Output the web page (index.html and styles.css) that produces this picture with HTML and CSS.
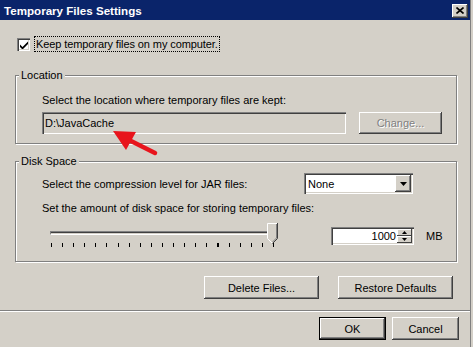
FILE: index.html
```html
<!DOCTYPE html>
<html lang="en">
<head>
    <meta charset="UTF-8">
    <title>Temporary Files Settings</title>
    <link rel="stylesheet" href="styles.css">
</head>
<body>

    <div class="window">
        <div class="titlebar">
            <span class="title">Temporary Files Settings</span>
            <span class="close-btn">
                <svg width="8" height="7" viewBox="0 0 8 7"><path d="M0.5 0.5 L7.5 6.5 M7.5 0.5 L0.5 6.5" stroke="#000" stroke-width="1.6"/></svg>
            </span>
        </div>

        <div class="content">
            <div class="check-row">
                <span class="checkbox">
                    <svg width="8" height="8" viewBox="0 0 8 8"><path d="M0 3.5 L2.5 6 L8 0.5 V3 L2.5 8.5 L0 6 Z" fill="#000"/></svg>
                </span>
                <span class="check-label">Keep temporary files on my computer.</span>
            </div>

            <fieldset class="group">
                <legend>Location</legend>
                <div class="group-body loc-body">
                    <p class="line">Select the location where temporary files are kept:</p>
                    <div class="loc-row">
                        <div class="field disabled">D:\JavaCache</div>
                        <button class="btn disabled-btn change-btn">Change...</button>
                    </div>
                </div>
            </fieldset>

            <fieldset class="group disk">
                <legend>Disk Space</legend>
                <div class="group-body disk-body">
                    <div class="combo-row">
                        <span class="combo-label">Select the compression level for JAR files:</span>
                        <div class="combo">
                            <span class="combo-text">None</span>
                            <span class="combo-arrow">
                                <svg width="7" height="4" viewBox="0 0 7 4"><path d="M0 0 H7 L3.5 4 Z" fill="#000"/></svg>
                            </span>
                        </div>
                    </div>
                    <p class="line amount-line">Set the amount of disk space for storing temporary files:</p>
                    <div class="slider-row">
                        <div class="slider">
                            <div class="track"></div>
                            <div class="ticks"></div>
                            <svg class="thumb" width="11" height="21" viewBox="0 0 11 21">
                                <path d="M0.5 15.5 V0.5 H10.5 V15.5 L5.5 20.5 Z" fill="#d4d0c8"/>
                                <path d="M0.5 15.5 V0.5 H10" stroke="#fff" fill="none"/>
                                <path d="M10.5 0 V15.5 L5.5 20.5" stroke="#404040" fill="none"/>
                                <path d="M9.5 1 V15 L5.5 19" stroke="#808080" fill="none"/>
                                <path d="M0.5 15.5 L5 20" stroke="#fff" fill="none"/>
                            </svg>
                        </div>
                        <div class="spinner">
                            <span class="spin-value">1000</span>
                            <span class="spin-btns">
                                <span class="spin-btn"><svg width="5" height="3" viewBox="0 0 5 3"><path d="M0 3 H5 L2.5 0 Z" fill="#000"/></svg></span>
                                <span class="spin-btn"><svg width="5" height="3" viewBox="0 0 5 3"><path d="M0 0 H5 L2.5 3 Z" fill="#000"/></svg></span>
                            </span>
                        </div>
                        <span class="unit">MB</span>
                    </div>
                </div>
            </fieldset>

            <div class="cache-buttons">
                <button class="btn wide-btn">Delete Files...</button>
                <button class="btn wide-btn">Restore Defaults</button>
            </div>
        </div>

        <div class="separator"></div>

        <div class="dialog-buttons">
            <button class="btn dlg-btn default-btn">OK</button>
            <button class="btn dlg-btn">Cancel</button>
        </div>

        <!-- annotation arrow pointing at the cache path -->
        <svg class="arrow" width="60" height="36" viewBox="0 0 60 36">
            <path d="M50 28 L24 15" stroke="#e8141c" stroke-width="4.5" stroke-linecap="round"/>
            <path d="M8 6 L31 7 L21 25 Z" fill="#e8141c"/>
        </svg>
    </div>

</body>
</html>
```

FILE: styles.css
```css
body {
    margin: 0;
    padding: 0;
    background-color: #d4d0c8;
    font-family: 'Liberation Sans', Arial, sans-serif;
    font-size: 11px;
    color: #000;
}

.window {
    position: relative;
    width: 470px;
    height: 347px;
    border-right: 1px solid #808080;
    background-color: #d4d0c8;
}

.titlebar {
    height: 20px;
    background-color: #0a246a;
    display: flex;
    align-items: center;
    justify-content: space-between;
    padding: 0 2px 0 4px;
}

.title {
    color: #fff;
    font-weight: bold;
    font-size: 11.6px;
}

.close-btn {
    width: 16px;
    height: 14px;
    box-sizing: border-box;
    background: #d4d0c8;
    box-shadow: inset -1px -1px #404040, inset 1px 1px #fff, inset -2px -2px #808080;
    display: flex;
    align-items: center;
    justify-content: center;
    margin-top: 1px;
}

.content {
    padding: 0 13px 0 15px;
}

.check-row {
    display: flex;
    align-items: center;
    margin-top: 16px;
    height: 16px;
    padding-left: 2px;
}

.checkbox {
    width: 13px;
    height: 13px;
    box-sizing: border-box;
    background: #fff;
    box-shadow: inset 1px 1px #808080, inset 2px 2px #404040, inset -1px -1px #fff, inset -2px -2px #d4d0c8;
    display: flex;
    align-items: center;
    justify-content: center;
    padding: 1px 0 0 1px;
}

.check-label {
    margin-left: 4px;
    padding: 0 1px;
    line-height: 14px;
    border: 1px dotted #000;
    letter-spacing: -0.1px;
}

.group {
    margin: 16px 0 0 0;
    padding: 0;
    border: 1px solid #808080;
    box-shadow: 1px 1px 0 #fff, inset 1px 1px 0 #fff;
    min-width: 0;
}

.group legend {
    margin-left: 3px;
    padding: 0 2px;
    line-height: 14px;
    background-color: #d4d0c8;
}

.group-body {
    padding-left: 26px;
}

.loc-body {
    padding-top: 11px;
    padding-bottom: 9px;
}

.line {
    margin: 0;
    line-height: 14px;
}

.loc-row {
    display: flex;
    margin-top: 5px;
}

.field {
    width: 304px;
    height: 22px;
    box-sizing: border-box;
    padding: 0 3px;
    line-height: 22px;
    box-shadow: inset 1px 1px #808080, inset 2px 2px #404040, inset -1px -1px #fff, inset -2px -2px #d4d0c8;
}

.field.disabled {
    background-color: #d4d0c8;
}

.btn {
    font-family: 'Liberation Sans', Arial, sans-serif;
    font-size: 11px;
    color: #000;
    background-color: #d4d0c8;
    border: none;
    padding: 0;
    box-sizing: border-box;
    height: 23px;
    box-shadow: inset -1px -1px #404040, inset 1px 1px #fff, inset -2px -2px #808080;
}

.change-btn {
    width: 83px;
    height: 22px;
    margin-left: 13px;
}

.disabled-btn {
    color: #808080;
    text-shadow: 1px 1px 0 #fff;
}

.disk {
    margin-top: 10px;
}

.disk-body {
    padding-top: 5px;
    padding-bottom: 13px;
}

.combo-row {
    display: flex;
    align-items: center;
    height: 21px;
}

.combo-label {
    flex: 0 0 262px;
}

.combo {
    width: 109px;
    height: 21px;
    box-sizing: border-box;
    background: #fff;
    box-shadow: inset 1px 1px #808080, inset 2px 2px #404040, inset -1px -1px #fff, inset -2px -2px #d4d0c8;
    display: flex;
    align-items: center;
    justify-content: space-between;
    padding: 2px;
}

.combo-text {
    padding-left: 2px;
}

.combo-arrow {
    width: 16px;
    height: 17px;
    box-sizing: border-box;
    background: #d4d0c8;
    box-shadow: inset -1px -1px #404040, inset 1px 1px #fff, inset -2px -2px #808080, inset 2px 2px #d4d0c8;
    display: flex;
    align-items: center;
    justify-content: center;
}

.amount-line {
    margin-top: 7px;
}

.slider-row {
    display: flex;
    align-items: flex-start;
    margin-top: 6px;
    height: 27px;
}

.slider {
    position: relative;
    width: 230px;
    height: 27px;
    margin-left: 8px;
}

.track {
    margin-top: 10px;
    width: 222px;
    height: 4px;
    box-sizing: border-box;
    border-top: 1px solid #808080;
    border-left: 1px solid #808080;
    border-bottom: 1px solid #fff;
    background: #d4d0c8;
    box-shadow: inset 0 1px #404040;
}

.ticks {
    margin-top: 8px;
    margin-left: 1px;
    width: 224px;
    height: 4px;
    background: repeating-linear-gradient(to right, #000 0 1px, transparent 1px 11.1px);
}

.thumb {
    position: absolute;
    left: 217px;
    top: 2px;
}

.spinner {
    margin-left: 51px;
    margin-top: 6px;
    width: 83px;
    height: 18px;
    box-sizing: border-box;
    background: #fff;
    box-shadow: inset 1px 1px #808080, inset 2px 2px #404040, inset -1px -1px #fff, inset -2px -2px #d4d0c8;
    display: flex;
    align-items: center;
    justify-content: flex-end;
    padding: 2px;
}

.spin-value {
    padding-right: 1px;
}

.spin-btns {
    display: flex;
    flex-direction: column;
    width: 15px;
    height: 14px;
}

.spin-btn {
    flex: 1;
    background: #d4d0c8;
    box-shadow: inset -1px -1px #404040, inset 1px 1px #fff;
    display: flex;
    align-items: center;
    justify-content: center;
}

.unit {
    margin-left: 12px;
    margin-top: 9px;
}

.cache-buttons {
    display: flex;
    justify-content: flex-end;
    gap: 19px;
    margin-top: 14px;
    padding-right: 4px;
}

.wide-btn {
    width: 115px;
}

.separator {
    margin-top: 11px;
    border-top: 1px solid #808080;
    border-bottom: 1px solid #fff;
}

.dialog-buttons {
    display: flex;
    justify-content: flex-end;
    gap: 6px;
    margin-top: 5px;
    padding-right: 11px;
}

.dlg-btn {
    width: 67px;
}

.default-btn {
    box-shadow: inset 0 0 0 1px #000, inset -2px -2px #404040, inset 2px 2px #fff, inset -3px -3px #808080;
}

.arrow {
    position: absolute;
    left: 105px;
    top: 125px;
}
```
